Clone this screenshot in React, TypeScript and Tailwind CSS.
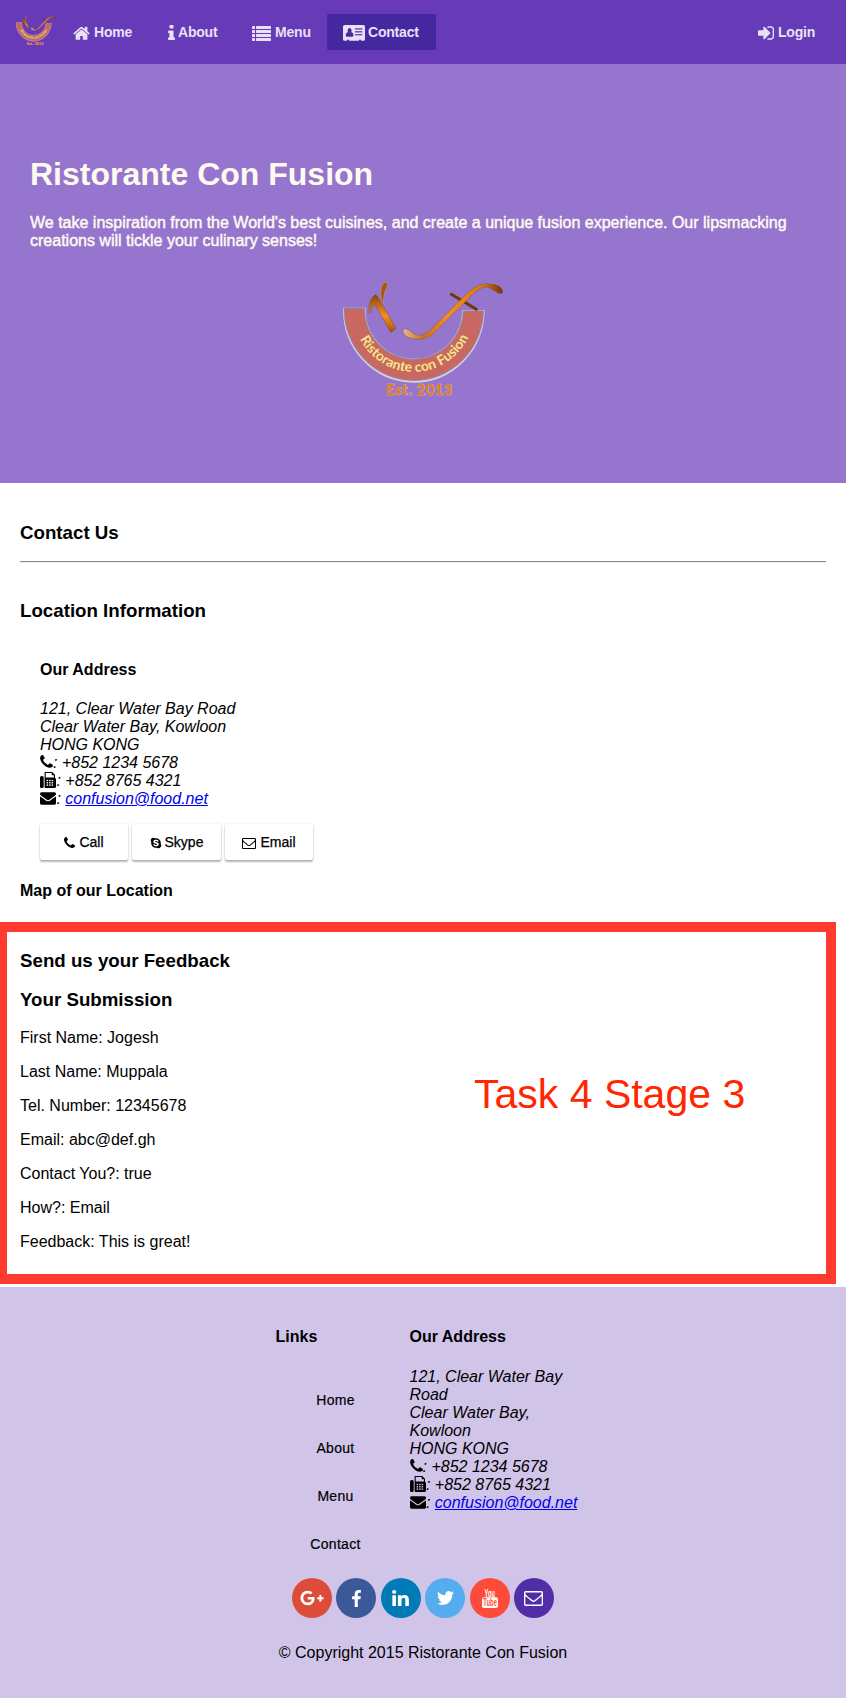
import React from "react";
import { FaGooglePlusG, FaSkype } from "react-icons/fa";

type IconProps = { className?: string };

const PHONE =
  "M1600 1240q0 27-10 70.5t-21 68.5q-21 50-122 106-94 51-186 51-27 0-53-3.5t-57.5-12.5-47-14.5-55.5-20.5-49-18q-98-35-175-83-127-79-264-216t-216-264q-48-77-83-175-3-9-18-49t-20.5-55.5-14.5-47-12.5-57.5-3.5-53q0-92 51-186 56-101 106-122 25-11 68.5-21t70.5-10q14 0 21 3 18 6 53 76 11 19 30 54t35 63.5 31 53.5q3 4 17.5 25t21.5 35.5 7 28.5q0 20-28.5 50t-62 55-62 53-28.5 46q0 9 5 22.5t8.5 20.5 14 24 11.5 19q76 137 174 235t235 174q2 1 19 11.5t24 14 20.5 8.5 22.5 5q18 0 46-28.5t53-62 55-62 50-28.5q14 0 28.5 7t35.5 21.5 25 17.5q25 15 53.5 31t63.5 35 54 30q70 35 76 53 3 7 3 21z";
const HOME =
  "M1472 992v480q0 26-19 45t-45 19h-384v-384h-256v384h-384q-26 0-45-19t-19-45v-480q0-1 .5-3t.5-3l575-474 575 474q1 2 1 6zm223-69l-62 74q-8 9-21 11h-3q-13 0-21-7l-692-577-692 577q-12 8-24 7-13-2-21-11l-62-74q-8-10-7-23.5t11-21.5l719-599q32-26 76-26t76 26l244 204v-195q0-14 9-23t23-9h192q14 0 23 9t9 23v408l219 182q10 8 11 21.5t-7 23.5z";
const INFO =
  "M1216 1344v128q0 26-19 45t-45 19h-512q-26 0-45-19t-19-45v-128q0-26 19-45t45-19h64v-384h-64q-26 0-45-19t-19-45v-128q0-26 19-45t45-19h384q26 0 45 19t19 45v576h64q26 0 45 19t19 45zm-128-1152v192q0 26-19 45t-45 19h-256q-26 0-45-19t-19-45v-192q0-26 19-45t45-19h256q26 0 45 19t19 45z";
const SIGN_IN =
  "M1312 896q0 26-19 45l-544 544q-19 19-45 19t-45-19-19-45v-288h-448q-26 0-45-19t-19-45v-384q0-26 19-45t45-19h448v-288q0-26 19-45t45-19 45 19l544 544q19 19 19 45zm352-352v704q0 119-84.5 203.5t-203.5 84.5h-320q-13 0-22.5-9.5t-9.5-22.5q0-4-1-20t-.5-26.5 3-23.5 10-19.5 20.5-6.5h320q66 0 113-47t47-113v-704q0-66-47-113t-113-47h-312l-11.5-1-11.5-3-8-5.5-7-9-2-13.5q0-4-1-20t-.5-26.5 3-23.5 10-19.5 20.5-6.5h320q119 0 203.5 84.5t84.5 203.5z";
const ENVELOPE =
  "M1792 710v794q0 66-47 113t-113 47h-1472q-66 0-113-47t-47-113v-794q44 49 101 87 362 246 497 345 57 42 92.5 65.5t94.5 48 110 24.5h2q51 0 110-24.5t94.5-48 92.5-65.5q170-123 498-345 57-39 100-87zm0-294q0 79-49 151t-122 123q-376 261-468 325-10 7-42.5 31t-54 38.5-52 32.5-57.5 27-50 9h-2q-23 0-50-9t-57.5-27-52-32.5-54-38.5-42.5-31q-91-64-262-182.5t-205-142.5q-62-42-117-115.5t-55-136.5q0-78 41.5-130t118.5-52h1472q65 0 112.5 47t47.5 113z";
const ENVELOPE_O =
  "M1664 1504v-768q-32 36-69 66-268 206-426 338-51 43-83 67t-86.5 48.5-102.5 24.5h-2q-48 0-102.5-24.5t-86.5-48.5-83-67q-158-132-426-338-37-30-69-66v768q0 13 9.5 22.5t22.5 9.5h1472q13 0 22.5-9.5t9.5-22.5zm0-1051v-24.5l-.5-13-3-12.5-5.5-9-9-7.5-14-2.5h-1472q-13 0-22.5 9.5t-9.5 22.5q0 168 147 284 193 152 401 317 6 5 35 29.5t46 37.5 44.5 31.5 50.5 27.5 43 9h2q20 0 43-9t50.5-27.5 44.5-31.5 46-37.5 35-29.5q208-165 401-317 54-43 100.5-115.5t46.5-131.5zm128-37v1088q0 66-47 113t-113 47h-1472q-66 0-113-47t-47-113v-1088q0-66 47-113t113-47h1472q66 0 113 47t47 113z";
const FACEBOOK =
  "M1343 12v264h-157q-86 0-116 36t-30 108v189h293l-39 296h-254v759h-306v-759h-255v-296h255v-218q0-186 104-288.5t277-102.5q147 0 228 12z";
const LINKEDIN =
  "M477 625v991h-330v-991h330zm21-306q1 73-50.5 122t-135.5 49h-2q-82 0-132-49t-50-122q0-74 51.5-122.5t134.5-48.5 133 48.5 51 122.5zm1166 729v568h-329v-530q0-105-40.5-164.5t-126.5-59.5q-63 0-105.5 34.5t-63.5 85.5q-11 30-11 81v553h-329q2-399 2-647t-1-296l-1-48h329v144h-2q20-32 41-56t56.5-52 87-43.5 114.5-15.5q171 0 275 113.5t104 332.5z";
const TWITTER =
  "M1684 408q-67 98-162 167 1 14 1 42 0 130-38 259.5t-115.5 248.5-184.5 210.5-258 146-323 54.5q-271 0-496-145 35 4 78 4 225 0 401-138-105-2-188-64.5t-114-159.5q33 5 61 5 43 0 85-11-112-23-185.5-111.5t-73.5-205.5v-4q68 38 146 41-66-44-105-115t-39-154q0-88 44-163 121 149 294.5 238.5t371.5 99.5q-8-38-8-74 0-134 94.5-228.5t228.5-94.5q140 0 236 102 109-21 205-78-37 115-142 178 93-10 186-50z";

function Glyph({ d, box = "0 0 1792 1792", className = "" }: IconProps & { d: string; box?: string }) {
  return (
    <svg viewBox={box} fill="currentColor" className={`shrink-0 ${className}`}>
      <path d={d} />
    </svg>
  );
}

function ListIcon({ className = "" }: IconProps) {
  return (
    <svg viewBox="0 0 19 15" fill="currentColor" className={`shrink-0 ${className}`}>
      {[0, 4, 8, 12].map((y) => (
        <g key={y}>
          <rect x="0" y={y} width="3" height="3" rx=".4" />
          <rect x="4" y={y} width="15" height="3" rx=".4" />
        </g>
      ))}
    </svg>
  );
}

function AddressCard({ className = "" }: IconProps) {
  return (
    <svg viewBox="0 0 22 16" fill="currentColor" className={`shrink-0 ${className}`}>
      <path d="M1.6 0h18.8A1.6 1.6 0 0 1 22 1.6v12.6a1.6 1.6 0 0 1-1.6 1.6H18v-1h-2v1H6v-1H4v1H1.6A1.6 1.6 0 0 1 0 14.2V1.6A1.6 1.6 0 0 1 1.6 0z" />
      <g fill="#4527a0">
        <ellipse cx="6.6" cy="5.4" rx="2" ry="2.5" />
        <path d="M4.7 7.3h3.8c1.6.3 1.9 2 1.9 3.3 0 .8-.5 1.2-1.2 1.2H4c-.7 0-1.2-.4-1.2-1.2 0-1.3.3-3 1.9-3.3z" />
        <rect x="12" y="3.4" width="7.4" height="1.1" />
        <rect x="12" y="6.3" width="7.4" height="1.1" />
        <rect x="12" y="9.2" width="7.4" height="1.1" />
      </g>
    </svg>
  );
}

function Fax({ className = "", hole }: IconProps & { hole: string }) {
  return (
    <svg viewBox="0 0 16 16" fill="none" className={`shrink-0 ${className}`}>
      <rect x="0" y="4" width="3.7" height="12" rx="1.5" fill="currentColor" />
      <path d="M4.6 0h7.6L15 2.8V6a1.5 1.5 0 0 1 1 1.4v7A1.5 1.5 0 0 1 14.5 16h-9a1 1 0 0 1-.9-1z" fill="currentColor" />
      <path d="M5.7 1.1h6v2.2h2.2v2.3H5.7z" fill={hole} />
      <g fill={hole}>
        {[7.8, 10.1, 12.4].map((y) =>
          [6.6, 9.1, 11.6].map((x) => <rect key={`${x}-${y}`} x={x} y={y} width="1.5" height="1.4" />)
        )}
      </g>
    </svg>
  );
}

function YouTubeIcon() {
  return (
    <svg viewBox="0 0 40 40" className="size-10">
      <text transform="translate(14.6 18.5) scale(.54 1)" className="fill-white font-['Liberation_Sans'] text-[10.5px] font-bold">You</text>
      <rect x="12" y="19.2" width="16" height="10.8" rx="2" fill="#fff" />
      <text transform="translate(13.3 28.4) scale(.56 1)" className="fill-[#ff4b3a] font-['Liberation_Sans'] text-[10.5px] font-bold">Tube</text>
    </svg>
  );
}

function Logo({ className, id }: { className: string; id: string }) {
  return (
    <svg viewBox="38 35 480 345" preserveAspectRatio="none" className={className}>
      <defs>
        <path id={`${id}-arc`} d="M67 119A183 186 0 0 0 433 119" />
        <linearGradient id={`${id}-wood`} x1="0" y1="0" x2="1" y2="0">
          <stop offset="0" stopColor="#e0b896" />
          <stop offset=".2" stopColor="#c87318" />
          <stop offset=".45" stopColor="#ef8f25" />
          <stop offset=".8" stopColor="#d87914" />
          <stop offset="1" stopColor="#733608" />
        </linearGradient>
        <linearGradient id={`${id}-stick`} x1="0" y1="0" x2="0" y2="1">
          <stop offset="0" stopColor="#8a4708" />
          <stop offset=".55" stopColor="#f08f22" />
          <stop offset="1" stopColor="#a85208" />
        </linearGradient>
      </defs>
      <path d="M41 115H103A147 149 0 0 0 398 122H460A209 215 0 0 1 41 115z" fill="#c96862" stroke="#d5cfdc" strokeWidth="6" />
      <path d="M41 113H103A147 149 0 0 0 398 121H460A209 213 0 0 1 41 113z" fill="#c96862" stroke="#6f9bd0" strokeWidth="2" />
      <path d="M156 96C147 72 151 36 166 36C174 38 172 48 167 57C160 72 159 84 160 98z" fill="#a6570e" stroke="#e6c9a0" strokeWidth="1" />
      <path d="M117 128C113 104 122 78 136 73C142 77 145 84 149 91L197 174L182 187L135 105C130 99 122 109 120 128z" fill={`url(#${id}-stick)`} stroke="#6e3507" strokeWidth="1" />
      <path d="M363 72L438 117" stroke="#703707" strokeWidth="9" strokeLinecap="round" />
      <path d="M219 179C222 171 236 178 246 187C262 199 280 197 300 180L391 88C426 51 454 35 484 42C507 43 520 57 516 67C507 77 491 56 472 50C449 47 427 70 397 103C359 137 332 168 305 193C279 211 245 210 225 196C219 190 218 184 219 179z" fill={`url(#${id}-wood)`} stroke="#804009" strokeWidth="1" />
      <text textAnchor="middle" className="fill-[#ffe09a] stroke-[#b5713c] font-[Lato] text-[41px] font-bold [paint-order:stroke]" strokeWidth="3">
        <textPath href={`#${id}-arc`} startOffset="50.5%" textLength="404" lengthAdjust="spacingAndGlyphs">Ristorante con Fusion</textPath>
      </text>
      <text x="168" y="375" textLength="198" lengthAdjust="spacing" className="fill-[#e0781c] stroke-[#efc891] font-[Lato] text-[43px] font-bold [paint-order:stroke]" strokeWidth="2">Est. 2013</text>
    </svg>
  );
}

function Address({ hole, narrow = false }: { hole: string; narrow?: boolean }) {
  return (
    <address className="text-base leading-[18px] italic">
      {narrow ? (
        <>121, Clear Water Bay<br />Road<br />Clear Water Bay,<br />Kowloon<br /></>
      ) : (
        <>121, Clear Water Bay Road<br />Clear Water Bay, Kowloon<br /></>
      )}
      HONG KONG
      <div className="flex h-[18px]"><Glyph d={PHONE} box="192 128 1408 1536" className="mt-px h-[14px] w-[13px]" /><span>: +852 1234 5678</span></div>
      <div className="flex h-[18px]"><Fax hole={hole} className="size-4" /><span className="ml-[.4px]">: +852 8765 4321</span></div>
      <div className="flex h-[18px]"><Glyph d={ENVELOPE} box="0 256 1792 1408" className="mt-[2px] h-[13px] w-4" /><span className="ml-[.4px] whitespace-pre">: </span><a href="#mail" className="text-[#0000ee] underline">confusion@food.net</a></div>
    </address>
  );
}

const submission = [
  "First Name: Jogesh",
  "Last Name: Muppala",
  "Tel. Number: 12345678",
  "Email: abc@def.gh",
  "Contact You?: true",
  "How?: Email",
  "Feedback: This is great!",
];

const action = "flex h-9 items-center justify-center rounded-[2px] text-sm shadow-[0_2px_2px_rgba(0,0,0,.28),0_0_2px_rgba(0,0,0,.14)] [-webkit-text-stroke:.25px_black]";
const social = "flex size-10 items-center justify-center rounded-full text-white";

export default function App() {
  return (
    <div className="h-[1698px] w-[846px] overflow-hidden bg-white font-['Liberation_Sans',Arial,sans-serif] text-base leading-[18px] text-black">
      <nav className="flex h-16 items-center bg-[#673ab7] pl-4 text-sm font-bold tracking-[-0.2px] text-[#e8e1f5]">
        <Logo id="nav" className="-mt-[3px] h-[29px] w-10" />
        <a className="ml-[17px] flex w-[95px] items-center"><Glyph d={HOME} box="64 192 1664 1344" className="mt-[2px] mr-1 h-[14px] w-[17px]" />Home</a>
        <a className="flex w-[84px] items-center"><Glyph d={INFO} box="576 128 640 1408" className="mt-px mr-[3px] h-[15px] w-[7px]" />About</a>
        <a className="flex w-[75px] items-center"><ListIcon className="mt-[2px] mr-1 h-[15px] w-[19px]" />Menu</a>
        <a className="flex h-9 w-[109px] items-center rounded-[2px] bg-[#4527a0] pl-4"><AddressCard className="mt-[2px] mr-[3px] h-4 w-[22px]" />Contact</a>
        <a className="ml-auto flex w-[88px] items-center"><Glyph d={SIGN_IN} box="128 256 1536 1280" className="mt-[2px] mr-1 h-[14px] w-4" />Login</a>
      </nav>

      <header className="h-[419px] bg-[#9575cd] px-[30px] pt-[92px] text-[#fffaf0]">
        <h1 className="text-[32px] leading-[37px] font-bold">Ristorante Con Fusion</h1>
        <p className="mt-[21px] whitespace-nowrap [-webkit-text-stroke:.45px_#fffaf0]">We take inspiration from the World's best cuisines, and create a unique fusion experience. Our lipsmacking<br />creations will tickle your culinary senses!</p>
        <Logo id="hero" className="mt-8 ml-[313px] h-[115px] w-40" />
      </header>

      <main className="relative h-[804px] px-5 pt-[39px]">
        <h3 className="text-[18.72px] leading-[22px] font-bold">Contact Us</h3>
        <hr className="mt-[17px] h-[2px] border-t border-b border-t-[#8c8c8c] border-b-[#eeeeee]" />
        <h3 className="mt-[37px] text-[18.72px] leading-[22px] font-bold">Location Information</h3>
        <section className="pl-5">
          <h4 className="mt-[39px] mb-[21px] font-bold">Our Address</h4>
          <Address hole="#ffffff" />
          <div className="mt-4 flex gap-1">
            <a className={`${action} w-[88px]`}><Glyph d={PHONE} box="192 128 1408 1536" className="mt-[2px] mr-1 h-3 w-[11px]" />Call</a>
            <a className={`${action} w-[89px]`}><FaSkype className="mt-px mr-[3px] h-3 w-3" />Skype</a>
            <a className={`${action} w-[88px]`}><Glyph d={ENVELOPE_O} box="0 256 1792 1408" className="mt-[2px] mr-1 h-[11px] w-[14px]" />Email</a>
          </div>
        </section>
        <h4 className="mt-[22px] font-bold">Map of our Location</h4>
        <h3 className="mt-[50px] text-[18.72px] leading-[22px] font-bold">Send us your Feedback</h3>
        <h3 className="mt-[17px] text-[18.72px] leading-[22px] font-bold">Your Submission</h3>
        <div className="mt-[18px] space-y-4">
          {submission.map((line) => <p key={line}>{line}</p>)}
        </div>
        <div className="absolute top-[439px] -left-[3px] flex h-[362px] w-[839px] border-10 border-[#ff3b30]">
          <span className="mt-[139px] ml-[467px] text-[41px] leading-[47px] whitespace-nowrap text-[#ff2600]">Task 4 Stage 3</span>
        </div>
      </main>

      <footer className="h-[411px] bg-[#d1c4e9] pt-[41px]">
        <div className="flex h-[250px] pl-[275.5px]">
          <section className="w-[134px]">
            <h4 className="font-bold">Links</h4>
            <ul className="mt-[30px] w-[120px] text-center text-sm leading-[48px] tracking-[.3px] [-webkit-text-stroke:.2px_black]">
              <li>Home</li><li>About</li><li>Menu</li><li>Contact</li>
            </ul>
          </section>
          <section>
            <h4 className="mb-[22px] font-bold">Our Address</h4>
            <Address hole="#d1c4e9" narrow />
          </section>
        </div>
        <div className="flex gap-[4.4px] pl-[292px]">
          <a className={`${social} bg-[#dd4b39]`}><FaGooglePlusG className="h-6 w-6" /></a>
          <a className={`${social} bg-[#3b5998]`}><Glyph d={FACEBOOK} box="479 0 864 1664" className="h-[17px] w-[9px]" /></a>
          <a className={`${social} bg-[#007bb6]`}><Glyph d={LINKEDIN} box="128 148 1536 1468" className="h-4 w-[17px]" /></a>
          <a className={`${social} bg-[#55acee]`}><Glyph d={TWITTER} box="108 256 1576 1280" className="h-[14px] w-[17px]" /></a>
          <a className={`${social} bg-[#ff4b3a]`}><YouTubeIcon /></a>
          <a className={`${social} bg-[#512da8]`}><Glyph d={ENVELOPE_O} box="0 256 1792 1408" className="mt-px h-[15px] w-[19px]" /></a>
        </div>
        <p className="mt-[26px] text-center">© Copyright 2015 Ristorante Con Fusion</p>
      </footer>
    </div>
  );
}
